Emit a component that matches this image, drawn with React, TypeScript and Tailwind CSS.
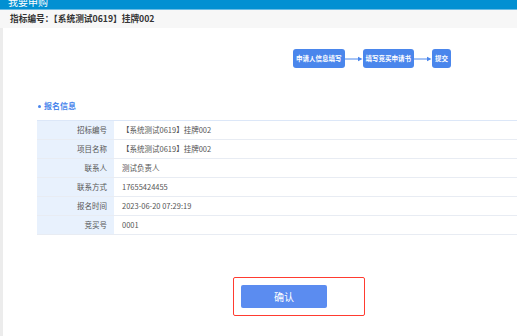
import React from 'react';

const rows: [string, string][] = [
  ['招标编号', '【系统测试0619】挂牌002'],
  ['项目名称', '【系统测试0619】挂牌002'],
  ['联系人', '测试负责人'],
  ['联系方式', '17655424455'],
  ['报名时间', '2023-06-20 07:29:19'],
  ['竞买号', '0001'],
];

const steps = ['申请人信息填写', '填写竞买申请书', '提交'];

function Arrow() {
  return (
    <svg width="18" height="6" viewBox="0 0 18 6" className="shrink-0">
      <line x1="0" y1="3" x2="15" y2="3" stroke="#4a86ec" strokeWidth="1" />
      <path d="M13 0.8 L17.5 3 L13 5.2 Z" fill="#4a86ec" />
    </svg>
  );
}

export default function App() {
  return (
    <div
      className="w-[517px] h-[336px] overflow-hidden bg-white flex flex-col"
      style={{ fontFamily: '"Noto Sans CJK SC", "Noto Sans", sans-serif' }}
    >
      <div className="h-[10px] bg-[#0290d2] overflow-hidden border-b border-[#6cbce4]">
        <div className="pl-[8px] -mt-[4px] text-[10px] leading-[12px] text-white">我要申购</div>
      </div>
      <div className="h-[18px] bg-[#f7f7f7] flex items-center pl-[10px]">
        <span className="text-[8.7px] font-bold text-[#333]">指标编号：【系统测试0619】挂牌002</span>
      </div>
      <div className="flex flex-1">
        <div className="w-[3px] bg-[#ececec]" />
        <div className="flex-1 flex flex-col">
          <div className="flex items-center pl-[290px] pt-[21px]">
            {steps.map((s, i) => (
              <React.Fragment key={s}>
                {i > 0 && <Arrow />}
                <div className="h-[19px] px-[3px] rounded-[3px] bg-[#4a86ec] flex items-center text-white text-[6.5px] font-bold leading-none">
                  {s}
                </div>
              </React.Fragment>
            ))}
          </div>
          <div className="pl-[35px] mt-[34px] flex items-center gap-[3px] text-[#4a86ec] text-[8px] font-bold leading-none">
            <span className="w-[3px] h-[3px] rounded-full bg-[#4a86ec]" />
            <span>报名信息</span>
          </div>
          <div className="ml-[34px] mt-[10px] border-t border-[#dce7f8]">
            {rows.map(([k, v]) => (
              <div key={k} className="flex h-[19px] border-b border-[#e8ecf3]">
                <div className="w-[77px] bg-[#e8f1fd] flex items-center justify-end pr-[7px] text-[7.5px] text-[#555]">
                  {k}
                </div>
                <div className="flex-1 flex items-center pl-[8px] text-[7.5px] text-[#555]">{v}</div>
              </div>
            ))}
          </div>
          <div className="flex pl-[230px] mt-[42px]">
            <div className="w-[132px] h-[39px] border-[1.5px] border-[#ff3b30] rounded-[2px] flex items-center pl-[7px]">
              <div className="w-[86px] h-[23px] rounded-[2px] bg-[#5b8cf0] flex items-center justify-center text-white text-[10px]">
                确认
              </div>
            </div>
          </div>
        </div>
      </div>
    </div>
  );
}
